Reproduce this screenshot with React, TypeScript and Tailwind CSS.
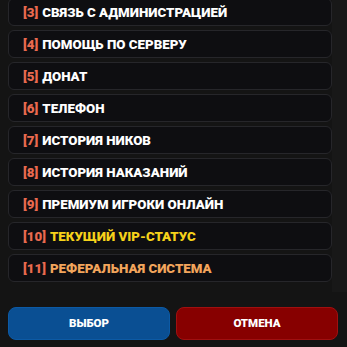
import React from "react";

const items: { n: number; label: string; color: string }[] = [
  { n: 3, label: "СВЯЗЬ С АДМИНИСТРАЦИЕЙ", color: "text-white" },
  { n: 4, label: "ПОМОЩЬ ПО СЕРВЕРУ", color: "text-white" },
  { n: 5, label: "ДОНАТ", color: "text-white" },
  { n: 6, label: "ТЕЛЕФОН", color: "text-white" },
  { n: 7, label: "ИСТОРИЯ НИКОВ", color: "text-white" },
  { n: 8, label: "ИСТОРИЯ НАКАЗАНИЙ", color: "text-white" },
  { n: 9, label: "ПРЕМИУМ ИГРОКИ ОНЛАЙН", color: "text-white" },
  { n: 10, label: "ТЕКУЩИЙ VIP-СТАТУС", color: "text-[#f6d21a]" },
  { n: 11, label: "РЕФЕРАЛЬНАЯ СИСТЕМА", color: "text-[#f2a55c]" },
];

export default function App() {
  return (
    <div
      className="w-[347px] h-[347px] overflow-hidden bg-[#141414] flex flex-col"
      style={{ fontFamily: "Roboto, 'Noto Sans', sans-serif" }}
    >
      <div className="flex h-[292px]">
        <div className="flex-1 pl-2 mt-[-2px] flex flex-col gap-1">
          {items.map((it) => (
            <div
              key={it.n}
              className="h-[28px] shrink-0 rounded-[6px] border border-[#26262a] bg-[#0e0e11] flex items-center pl-[14px] pt-[2px] text-[13.3px] font-black leading-none"
            >
              <span className="text-[#ea6a4f] mr-[4px]">[{it.n}]</span>
              <span className={it.color}>{it.label}</span>
            </div>
          ))}
        </div>
        <div className="w-[15px] bg-[#181818]" />
      </div>
      <div className="flex gap-[6px] pl-2 pr-[9px] mt-[15px]">
        <button className="flex-1 h-[33px] rounded-[8px] bg-[#0a4f93] border border-[#0c5aa5] text-white text-[11.5px] font-black flex items-center justify-center">
          ВЫБОР
        </button>
        <button className="flex-1 h-[33px] rounded-[8px] bg-[#870000] border border-[#a01010] text-white text-[11.5px] font-black flex items-center justify-center">
          ОТМЕНА
        </button>
      </div>
    </div>
  );
}
